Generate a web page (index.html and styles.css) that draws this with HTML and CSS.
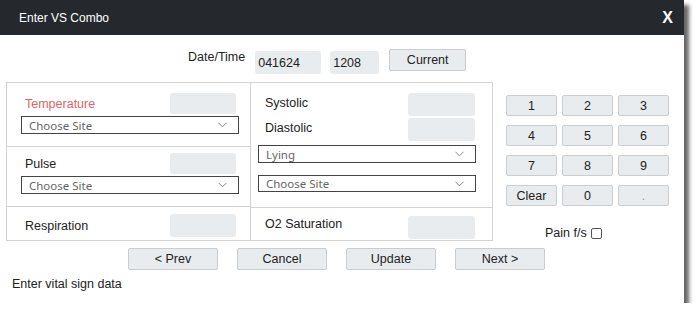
FILE: index.html
```html
<!DOCTYPE html>
<html>
    <head>
        <meta charset="utf-8">
        <title>Enter VS Combo</title>
        <link rel="stylesheet" href="styles.css">
    </head>
    <body>
        <div class="dialog">
            <div class="titlebar">
                <span class="title">Enter VS Combo</span>
                <span class="close">X</span>
            </div>
            <div class="datetime">
                <span class="dt-label">Date/Time</span>
                <div class="field dt-date">041624</div>
                <div class="field dt-time">1208</div>
                <button class="btn dt-now">Current</button>
            </div>
            <div class="main">
                <div class="vitals">
                    <div class="col col-left">
                        <div class="cell cell-temp">
                            <div class="row">
                                <span class="label label-alert">Temperature</span>
                                <div class="field box"></div>
                            </div>
                            <div class="select"><span>Choose Site</span><svg width="9" height="6" viewBox="0 0 9 6"><path d="M0.5 0.8 L4.5 4.8 L8.5 0.8" fill="none" stroke="#888" stroke-width="1"/></svg></div>
                        </div>
                        <div class="cell cell-pulse">
                            <div class="row">
                                <span class="label">Pulse</span>
                                <div class="field box"></div>
                            </div>
                            <div class="select"><span>Choose Site</span><svg width="9" height="6" viewBox="0 0 9 6"><path d="M0.5 0.8 L4.5 4.8 L8.5 0.8" fill="none" stroke="#888" stroke-width="1"/></svg></div>
                        </div>
                        <div class="cell cell-resp">
                            <div class="row">
                                <span class="label">Respiration</span>
                                <div class="field box box-tall"></div>
                            </div>
                        </div>
                    </div>
                    <div class="col col-right">
                        <div class="cell cell-bp">
                            <div class="row">
                                <span class="label">Systolic</span>
                                <div class="field box box-tall"></div>
                            </div>
                            <div class="row">
                                <span class="label">Diastolic</span>
                                <div class="field box box-tall"></div>
                            </div>
                            <div class="select select-lying"><span>Lying</span><svg width="9" height="6" viewBox="0 0 9 6"><path d="M0.5 0.8 L4.5 4.8 L8.5 0.8" fill="none" stroke="#888" stroke-width="1"/></svg></div>
                            <div class="select select-site"><span>Choose Site</span><svg width="9" height="6" viewBox="0 0 9 6"><path d="M0.5 0.8 L4.5 4.8 L8.5 0.8" fill="none" stroke="#888" stroke-width="1"/></svg></div>
                        </div>
                        <div class="cell cell-o2">
                            <div class="row">
                                <span class="label">O2 Saturation</span>
                                <div class="field box box-tall"></div>
                            </div>
                        </div>
                    </div>
                </div>
                <div class="side">
                    <div class="keypad">
                        <button class="btn key">1</button>
                        <button class="btn key">2</button>
                        <button class="btn key">3</button>
                        <button class="btn key">4</button>
                        <button class="btn key">5</button>
                        <button class="btn key">6</button>
                        <button class="btn key">7</button>
                        <button class="btn key">8</button>
                        <button class="btn key">9</button>
                        <button class="btn key">Clear</button>
                        <button class="btn key">0</button>
                        <button class="btn key key-dot">.</button>
                    </div>
                    <label class="pain">Pain f/s <input type="checkbox" class="pain-check"></label>
                </div>
            </div>
            <div class="actions">
                <button class="btn action">&lt; Prev</button>
                <button class="btn action">Cancel</button>
                <button class="btn action">Update</button>
                <button class="btn action">Next &gt;</button>
            </div>
            <div class="status">Enter vital sign data</div>
        </div>
    </body>
</html>
```

FILE: styles.css
```css
body {
    margin: 0;
    background: white;
    font-family: "Liberation Sans", Arial, sans-serif;
    font-size: 12.5px;
    color: #222;
}
.dialog {
    width: 684px;
    height: 303px;
    background: white;
    box-shadow: 5px 5px 4px rgba(0, 0, 0, 0.6);
}
.titlebar {
    height: 35px;
    background: #25292d;
    color: white;
    display: flex;
    align-items: center;
    justify-content: space-between;
    padding: 0 11px 0 19px;
    box-sizing: border-box;
}
.title {
    font-size: 12px;
}
.close {
    font-size: 16px;
    font-weight: bold;
}
.btn {
    background: #e9ecef;
    border: 1px solid #c9ccd0;
    border-radius: 2px;
    font-family: "Liberation Sans", Arial, sans-serif;
    font-size: 12.5px;
    color: #222;
    padding: 0;
    margin: 0;
}
.field {
    background: #e9ecef;
    border-radius: 3px;
    box-sizing: border-box;
}
.datetime {
    display: flex;
    align-items: flex-start;
    margin-top: 14px;
    padding-left: 188px;
    height: 25px;
}
.dt-label {
    line-height: 16px;
    margin-right: 10px;
}
.dt-date, .dt-time {
    margin-top: 2px;
    height: 23px;
    line-height: 25px;
    padding-left: 3px;
}
.dt-date {
    width: 66px;
    margin-right: 9px;
}
.dt-time {
    width: 49px;
    margin-right: 10px;
}
.dt-now {
    width: 77px;
    height: 22px;
}
.main {
    display: flex;
    align-items: flex-start;
    margin-top: 8px;
    padding-left: 6px;
}
.vitals {
    display: flex;
    width: 487px;
    height: 159px;
    border: 1px solid #d3d3d3;
    box-sizing: border-box;
}
.col {
    display: flex;
    flex-direction: column;
}
.col-left {
    width: 244px;
    border-right: 1px solid #d3d3d3;
    box-sizing: border-box;
}
.col-right {
    flex: 1;
}
.cell {
    box-sizing: border-box;
    display: flex;
    flex-direction: column;
}
.col-left .cell {
    padding-left: 14px;
    padding-right: 11px;
}
.col-right .cell {
    padding-left: 7px;
    padding-right: 16px;
}
.cell-temp {
    height: 64px;
    padding-top: 10px;
    border-bottom: 1px solid #d3d3d3;
}
.cell-pulse {
    height: 60px;
    padding-top: 6px;
    border-bottom: 1px solid #d3d3d3;
}
.cell-resp {
    flex: 1;
    padding-top: 7px;
}
.cell-bp {
    height: 125px;
    padding-top: 10px;
    border-bottom: 1px solid #d3d3d3;
}
.cell-o2 {
    flex: 1;
    padding-top: 8px;
}
.row {
    display: flex;
    align-items: center;
    justify-content: space-between;
}
.col-right .row {
    align-items: flex-start;
}
.col-left .label {
    padding-left: 4px;
}
.col-right .label {
    padding-left: 7px;
    margin-top: 3px;
}
.cell-o2 .label {
    margin-top: 1px;
}
.label-alert {
    color: #e06666;
}
.box {
    width: 66px;
    height: 21px;
    margin-right: 3px;
}
.box-tall {
    height: 23px;
}
.col-right .box {
    width: 67px;
    margin-right: 1px;
}
.cell-bp .row + .row {
    margin-top: 2px;
}
.select {
    display: flex;
    align-items: center;
    justify-content: space-between;
    height: 18px;
    margin-top: 2px;
    border: 1px solid #444;
    box-sizing: border-box;
    padding: 0 11px 0 7px;
    font-family: "Noto Sans", sans-serif;
    font-size: 11.5px;
    color: #666;
}
.select-lying {
    margin-top: 4px;
}
.select-site {
    margin-top: 12px;
    height: 17px;
}
.side {
    margin-left: 13px;
    padding-top: 13px;
}
.keypad {
    display: grid;
    grid-template-columns: repeat(3, 51px);
    grid-auto-rows: 21px;
    column-gap: 5px;
    row-gap: 9px;
}
.key-dot {
    color: #999;
}
.pain {
    display: flex;
    align-items: center;
    height: 14px;
    margin-top: 20px;
    padding-left: 39px;
}
.pain-check {
    appearance: none;
    width: 11px;
    height: 11px;
    margin: 0 0 0 4px;
    border: 1px solid #555;
    border-radius: 2px;
    background: white;
}
.actions {
    display: flex;
    gap: 19px;
    margin-top: 7px;
    padding-left: 128px;
}
.action {
    width: 90px;
    height: 22px;
}
.status {
    margin-top: 7px;
    padding-left: 12px;
}
```
